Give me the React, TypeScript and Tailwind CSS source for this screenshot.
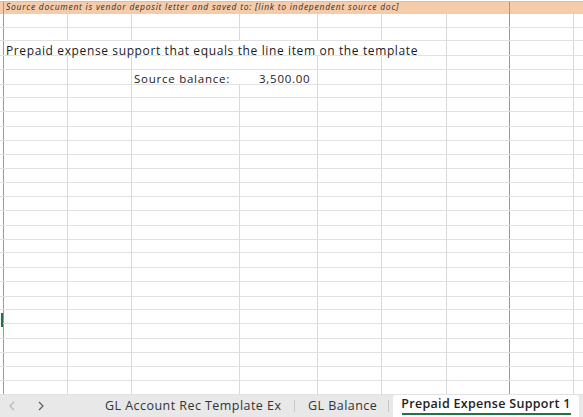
import React from "react";

const colW = [4, 64, 64, 108, 78, 64, 65, 63, 64];
const darkIdx = new Set([0, 7]);
const pattern = [14, 14, 15, 14, 15];

function Cell({ w, i, children, className = "" }: { w: number; i: number; children?: React.ReactNode; className?: string }) {
  return (
    <div
      className={
        "h-full shrink-0 border-r " +
        (darkIdx.has(i) ? "border-[#9a9a9a] " : "border-[#dadada] ") +
        className
      }
      style={{ width: w }}
    >
      {children}
    </div>
  );
}

function Row({ h, idx }: { h: number; idx: number }) {
  if (idx === 2) {
    return (
      <div className="flex border-b border-[#e2e2e2] box-border" style={{ height: h }}>
        <Cell w={4} i={0} />
        <div className="h-full shrink-0 border-r border-[#dadada] relative" style={{ width: 443 }}>
          <span className="absolute left-[2px] top-[2px] whitespace-nowrap text-[12px] leading-[16px] tracking-[0.62px] text-[#1a1a1a] font-['Open_Sans',sans-serif]">
            Prepaid expense support that equals the line item on the template
          </span>
        </div>
        <Cell w={63} i={7} />
        <Cell w={64} i={8} />
        <div className="flex-1" />
      </div>
    );
  }
  if (idx === 3 || idx === 4) {
    return (
      <div className="flex border-b border-[#e2e2e2] box-border" style={{ height: h }}>
        <Cell w={4} i={0} />
        <Cell w={64} i={1} />
        <Cell w={64} i={2} />
        <div className="h-full shrink-0 border-r border-[#dadada] relative text-[11.5px] leading-[14px] tracking-[0.75px] text-[#1a1a1a] font-['Open_Sans',sans-serif]" style={{ width: 186 }}>
          {idx === 4 && (
            <>
              <span className="absolute left-[2px] top-[2px] whitespace-nowrap">Source balance:</span>
              <span className="absolute left-[127px] top-[2px] whitespace-nowrap">3,500.00</span>
            </>
          )}
        </div>
        {colW.slice(5).map((w, k) => (
          <Cell key={k} w={w} i={k + 5} />
        ))}
        <div className="flex-1" />
      </div>
    );
  }
  return (
    <div className="flex border-b border-[#e2e2e2] box-border" style={{ height: h }}>
      {colW.map((w, i) => (
        <Cell key={i} w={w} i={i}>
          {i === 0 && idx === 21 ? <div className="ml-[1px] mt-[3px] h-[14px] w-[2px] bg-[#217346]" /> : null}
        </Cell>
      ))}
      <div className="flex-1" />
    </div>
  );
}

export default function App() {
  const rows = Array.from({ length: 27 }, (_, k) => pattern[k % 5]);
  return (
    <div className="w-[583px] h-[417px] bg-white overflow-hidden flex flex-col font-['Open_Sans',sans-serif]">
      <div className="h-[395px] overflow-hidden flex flex-col">
        <div className="h-[14px] shrink-0 flex flex-col">
          <div className="h-[2px] border-b border-[#c4c4c4] bg-white" />
          <div className="flex-1 flex bg-[#f6cbaa]">
            <div className="w-[4px] shrink-0 border-r border-[#9a9a9a]" />
            <div className="w-[506px] shrink-0 border-r border-[#9a9a9a] relative">
              <span className="absolute left-[2px] top-[-2px] whitespace-nowrap italic font-medium text-[8.5px] leading-[14px] tracking-[0.75px] text-[#2e2e2e]">
                Source document is vendor deposit letter and saved to: [link to independent source doc]
              </span>
            </div>
            <div className="flex-1" />
          </div>
        </div>
        {rows.map((h, k) => (
          <Row key={k} h={h} idx={k} />
        ))}
      </div>
      <div className="h-[22px] bg-[#e8e8e8] flex items-stretch text-[12.5px] tracking-[0.45px] text-[#333]">
        <div className="w-[24px] flex items-center justify-center text-[#b5b5b5]">
          <svg width="8" height="10" viewBox="0 0 8 10"><path d="M6 1 L2 5 L6 9" fill="none" stroke="currentColor" strokeWidth="1.1" /></svg>
        </div>
        <div className="w-[34px] flex items-center justify-center text-[#555]">
          <svg width="8" height="10" viewBox="0 0 8 10"><path d="M2 1 L6 5 L2 9" fill="none" stroke="currentColor" strokeWidth="1.1" /></svg>
        </div>
        <div className="w-[47px]" />
        <div className="w-[176px] flex items-center whitespace-nowrap">GL Account Rec Template Ex</div>
        <div className="w-[14px] flex items-center justify-end"><div className="w-px h-[12px] bg-[#c8c8c8]" /></div>
        <div className="w-[13px]" />
        <div className="w-[68px] flex items-center whitespace-nowrap">GL Balance</div>
        <div className="w-[13px] flex items-center justify-end"><div className="w-px h-[12px] bg-[#c8c8c8]" /></div>
        <div className="w-[4px]" />
        <div className="w-[186px] bg-white rounded-t-[3px] flex flex-col items-center pt-[1px]">
          <div className="font-semibold tracking-[0.3px] text-[#222] whitespace-nowrap leading-[16px]">Prepaid Expense Support 1</div>
          <div className="w-[169px] h-[2px] bg-[#217346] mt-[1px]" />
        </div>
      </div>
    </div>
  );
}
